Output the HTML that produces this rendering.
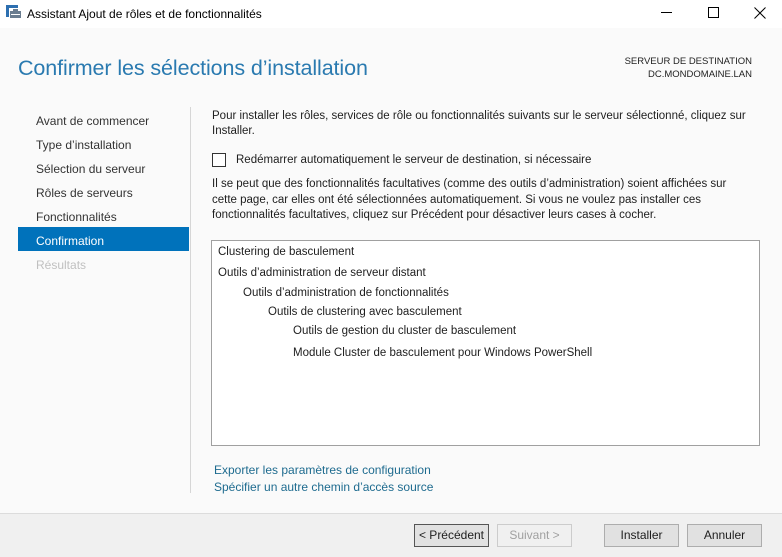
<!DOCTYPE html>
<html><head><meta charset="utf-8"><style>
*{margin:0;padding:0;box-sizing:border-box}
body{width:782px;height:557px;position:relative;background:#fafafa;font-family:"Liberation Sans",sans-serif;font-size:11.5px;color:#1e1e1e;overflow:hidden}
.a{position:absolute;white-space:nowrap}
#tb{position:absolute;left:0;top:0;width:782px;height:28px;background:#fff}
.nav{position:absolute;left:36px;font-size:12px;color:#333}
.btn{position:absolute;top:524px;height:23px;border:1px solid #adadad;background:#e1e1e1;font-size:12px;text-align:center;line-height:21px}
.lk{color:#1e6b8f;font-size:12px}
</style></head><body>
<div id="tb">
<svg class="a" style="left:6px;top:5px" width="16" height="14"><rect x="0" y="0" width="3" height="12" fill="#2d6fb0"/><rect x="0" y="0" width="12" height="3" fill="#2d6fb0"/><rect x="4" y="6" width="11" height="7" fill="#6a7d90"/><rect x="7" y="4" width="5" height="2" fill="#6a7d90"/><rect x="5" y="9" width="9" height="1" fill="#fff"/></svg>
<div class="a" style="left:27px;top:7px;font-size:12px;color:#000">Assistant Ajout de rôles et de fonctionnalités</div>
<div class="a" style="left:661px;top:12px;width:11px;height:1px;background:#000"></div>
<div class="a" style="left:708px;top:7px;width:11px;height:11px;border:1px solid #000"></div>
<svg class="a" style="left:754px;top:7px" width="12" height="12"><path d="M0.5 0.5L11.5 11.5M11.5 0.5L0.5 11.5" stroke="#000" stroke-width="1"/></svg>
</div>
<div class="a" style="left:18px;top:56px;font-size:21.5px;color:#2a7ab0;letter-spacing:-0.1px">Confirmer les sélections d’installation</div>
<div class="a" style="left:600px;top:55px;width:152px;text-align:right;font-size:9.5px;line-height:13px;color:#222">SERVEUR DE DESTINATION<br>DC.MONDOMAINE.LAN</div>
<div class="nav" style="top:114px">Avant de commencer</div>
<div class="nav" style="top:138px">Type d’installation</div>
<div class="nav" style="top:162px">Sélection du serveur</div>
<div class="nav" style="top:186px">Rôles de serveurs</div>
<div class="nav" style="top:210px">Fonctionnalités</div>
<div class="a" style="left:18px;top:227px;width:171px;height:24px;background:#0072bb"></div>
<div class="nav" style="top:234px;color:#fff">Confirmation</div>
<div class="nav" style="top:258px;color:#c0c0c0">Résultats</div>
<div class="a" style="left:190px;top:107px;width:1px;height:386px;background:#d6d6d6"></div>
<div class="a" style="left:212px;top:109px;font-size:11.5px;line-height:15px;white-space:normal;width:560px">Pour installer les rôles, services de rôle ou fonctionnalités suivants sur le serveur sélectionné, cliquez sur Installer.</div>
<div class="a" style="left:212px;top:153px;width:14px;height:14px;border:1px solid #333;background:#fff"></div>
<div class="a" style="left:236px;top:154px">Redémarrer automatiquement le serveur de destination, si nécessaire</div>
<div class="a" style="left:212px;top:177px;line-height:15.5px;white-space:normal;width:538px">Il se peut que des fonctionnalités facultatives (comme des outils d’administration) soient affichées sur cette page, car elles ont été sélectionnées automatiquement. Si vous ne voulez pas installer ces fonctionnalités facultatives, cliquez sur Précédent pour désactiver leurs cases à cocher.</div>
<div class="a" style="left:211px;top:240px;width:549px;height:206px;border:1px solid #a0a0a0;background:#fff"></div>
<div class="a" style="left:218px;top:246px">Clustering de basculement</div>
<div class="a" style="left:218px;top:267px">Outils d’administration de serveur distant</div>
<div class="a" style="left:243px;top:287px">Outils d’administration de fonctionnalités</div>
<div class="a" style="left:268px;top:306px">Outils de clustering avec basculement</div>
<div class="a" style="left:293px;top:325px">Outils de gestion du cluster de basculement</div>
<div class="a" style="left:293px;top:347px">Module Cluster de basculement pour Windows PowerShell</div>
<div class="a lk" style="left:214px;top:463px">Exporter les paramètres de configuration</div>
<div class="a lk" style="left:214px;top:480px">Spécifier un autre chemin d’accès source</div>
<div class="a" style="left:0;top:513px;width:782px;height:44px;background:#f0f0f0;border-top:1px solid #dcdcdc"></div>
<div class="btn" style="left:414px;width:75px;border-color:#555">&lt; Précédent</div>
<div class="btn" style="left:497px;width:75px;background:#f0f0f0;border-color:#ccc;color:#a0a0a0">Suivant &gt;</div>
<div class="btn" style="left:604px;width:75px">Installer</div>
<div class="btn" style="left:687px;width:75px">Annuler</div>
</body></html>
